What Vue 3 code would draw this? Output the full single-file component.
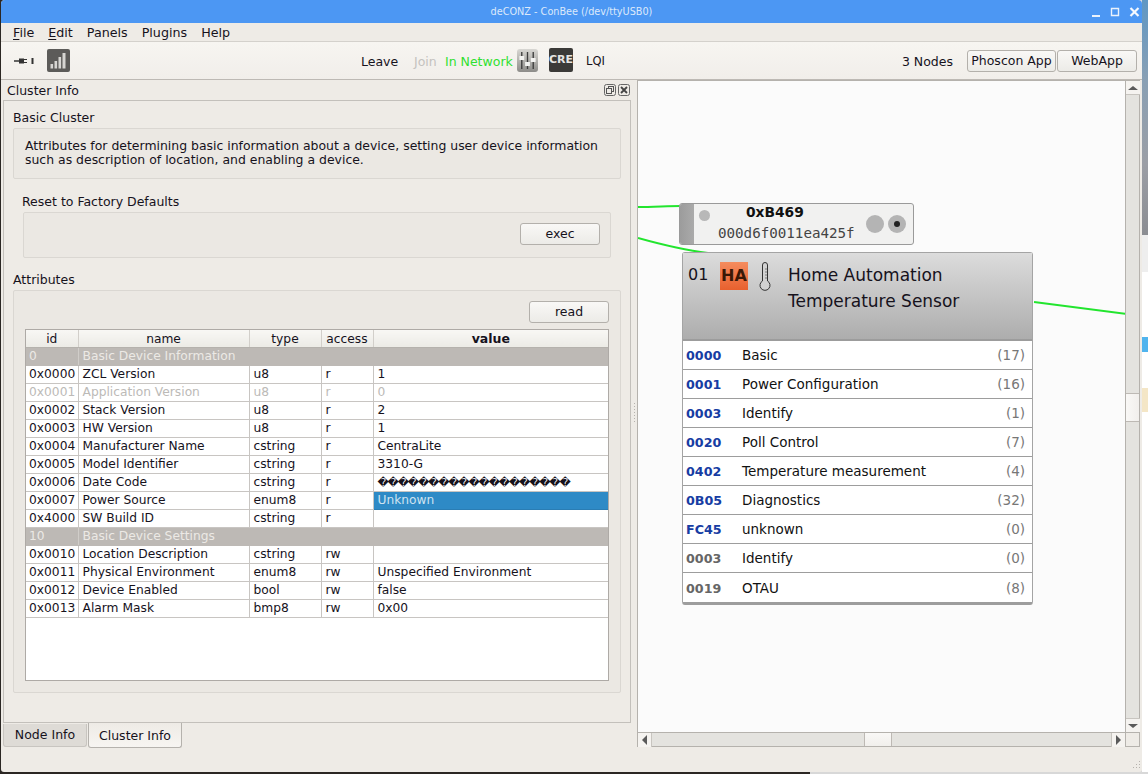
<script setup>
const menus = [
  { key: 'F', rest: 'ile' },
  { key: 'E', rest: 'dit' },
  { key: '', rest: 'Panels' },
  { key: '', rest: 'Plugins' },
  { key: '', rest: 'Help' }
]
const rows = [
  { section: true, id: '0', name: 'Basic Device Information' },
  { id: '0x0000', name: 'ZCL Version', type: 'u8', access: 'r', value: '1' },
  { id: '0x0001', name: 'Application Version', type: 'u8', access: 'r', value: '0', off: true },
  { id: '0x0002', name: 'Stack Version', type: 'u8', access: 'r', value: '2' },
  { id: '0x0003', name: 'HW Version', type: 'u8', access: 'r', value: '1' },
  { id: '0x0004', name: 'Manufacturer Name', type: 'cstring', access: 'r', value: 'CentraLite' },
  { id: '0x0005', name: 'Model Identifier', type: 'cstring', access: 'r', value: '3310-G' },
  { id: '0x0006', name: 'Date Code', type: 'cstring', access: 'r', value: '\uFFFD'.repeat(19), garbled: true },
  { id: '0x0007', name: 'Power Source', type: 'enum8', access: 'r', value: 'Unknown', selected: true },
  { id: '0x4000', name: 'SW Build ID', type: 'cstring', access: 'r', value: '' },
  { section: true, id: '10', name: 'Basic Device Settings' },
  { id: '0x0010', name: 'Location Description', type: 'cstring', access: 'rw', value: '' },
  { id: '0x0011', name: 'Physical Environment', type: 'enum8', access: 'rw', value: 'Unspecified Environment' },
  { id: '0x0012', name: 'Device Enabled', type: 'bool', access: 'rw', value: 'false' },
  { id: '0x0013', name: 'Alarm Mask', type: 'bmp8', access: 'rw', value: '0x00' }
]
const clusters = [
  { code: '0000', name: 'Basic', count: 17 },
  { code: '0001', name: 'Power Configuration', count: 16 },
  { code: '0003', name: 'Identify', count: 1 },
  { code: '0020', name: 'Poll Control', count: 7 },
  { code: '0402', name: 'Temperature measurement', count: 4 },
  { code: '0B05', name: 'Diagnostics', count: 32 },
  { code: 'FC45', name: 'unknown', count: 0 },
  { code: '0003', name: 'Identify', count: 0, out: true },
  { code: '0019', name: 'OTAU', count: 8, out: true }
]
</script>

<template>
  <div class="desktop">
    <div class="window">
      <header class="titlebar">
        <span class="title-text">deCONZ - ConBee (/dev/ttyUSB0)</span>
        <div class="win-buttons">
          <svg width="10" height="10" viewBox="0 0 10 10"><rect x="1" y="8" width="8" height="2" fill="#eaf2fc" /></svg>
          <svg width="10" height="10" viewBox="0 0 10 10"><path d="M1.5 1.5h7v7h-7z" fill="none" stroke="#eaf2fc" stroke-width="1.4" /></svg>
          <svg width="11" height="10" viewBox="0 0 11 10"><path d="M1.5 1l8 8M9.5 1l-8 8" stroke="#f4f8fe" stroke-width="2.2" /></svg>
        </div>
      </header>

      <nav class="menubar">
        <span v-for="m in menus" :key="m.rest" class="menu"><u v-if="m.key">{{ m.key }}</u>{{ m.rest }}</span>
      </nav>

      <div class="toolbar">
        <div class="tool-left">
          <svg class="plug" width="20" height="10" viewBox="0 0 20 10">
            <path d="M0 5h5" stroke="#333" stroke-width="1.4" />
            <path d="M5 2.500h5v5h-5z" fill="#333" />
            <path d="M10 3.500h3M10 6.500h3" stroke="#333" stroke-width="1" />
            <rect x="17.500" y="2" width="2" height="6" fill="#333" />
          </svg>
          <svg class="signal" width="23" height="23" viewBox="0 0 23 23">
            <rect x="0" y="0" width="23" height="23" rx="2" fill="#5c5b59" />
            <g fill="#d6d5d2">
              <rect x="3.500" y="15" width="2.600" height="4.500" />
              <rect x="7.500" y="12" width="2.600" height="7.500" />
              <rect x="11.500" y="8" width="2.600" height="11.500" />
              <rect x="15.500" y="4" width="3" height="15.500" />
            </g>
          </svg>
        </div>
        <div class="tool-center">
          <span class="t-leave">Leave</span>
          <span class="t-join">Join</span>
          <span class="t-net">In Network</span>
          <svg class="mixer" width="21" height="23" viewBox="0 0 22 23" preserveAspectRatio="none">
            <defs>
              <linearGradient id="mx" x1="0" y1="0" x2="0" y2="1"><stop offset="0" stop-color="#d8d7d3" /><stop offset="1" stop-color="#8d8c89" /></linearGradient>
            </defs>
            <rect width="22" height="23" rx="3" fill="url(#mx)" />
            <path d="M5 3v17M11 3v17M17 3v17" stroke="#3c3c3c" stroke-width="1.400" />
            <rect x="2.500" y="7" width="5" height="4" fill="#f2f2f0" />
            <rect x="8.500" y="13" width="5" height="4" fill="#f2f2f0" />
            <rect x="14.500" y="9" width="5" height="4" fill="#f2f2f0" />
          </svg>
          <span class="cre">CRE</span>
          <span class="t-lqi">LQI</span>
        </div>
        <div class="tool-right">
          <span class="t-nodes">3 Nodes</span>
          <button class="btn btn-phoscon">Phoscon App</button>
          <button class="btn btn-webapp">WebApp</button>
        </div>
      </div>

      <main class="workspace">
        <section class="dock">
          <div class="dock-title">
            <span>Cluster Info</span>
            <div class="dock-icons">
              <svg width="12" height="12" viewBox="0 0 12 12">
                <rect x="0.500" y="0.500" width="11" height="11" rx="2" fill="none" stroke="#666" />
                <rect x="4.500" y="2.500" width="5" height="5" fill="none" stroke="#555" />
                <rect x="2.500" y="4.500" width="5" height="5" fill="#eeebe6" stroke="#555" />
              </svg>
              <svg width="12" height="12" viewBox="0 0 12 12">
                <rect x="0.500" y="0.500" width="11" height="11" rx="2" fill="none" stroke="#666" />
                <path d="M3 3l6 6M9 3l-6 6" stroke="#444" stroke-width="1.800" />
              </svg>
            </div>
          </div>

          <div class="dock-frame">
            <h3 class="label">Basic Cluster</h3>
            <div class="group desc">
              Attributes for determining basic information about a device, setting user device information such as description of location, and enabling a device.
            </div>

            <h3 class="label label-reset">Reset to Factory Defaults</h3>
            <div class="group reset">
              <button class="btn btn-action">exec</button>
            </div>

            <h3 class="label label-attr">Attributes</h3>
            <div class="group attrs">
              <div class="attrs-head"><button class="btn btn-action">read</button></div>
              <div class="table-wrap">
                <table class="attr-table">
                  <colgroup>
                    <col class="c-id" /><col class="c-name" /><col class="c-type" /><col class="c-access" /><col class="c-value" />
                  </colgroup>
                  <thead>
                    <tr>
                      <th>id</th><th>name</th><th>type</th><th>access</th><th class="th-value">value</th>
                    </tr>
                  </thead>
                  <tbody>
                    <template v-for="r in rows" :key="r.id">
                      <tr v-if="r.section" class="section">
                        <td>{{ r.id }}</td>
                        <td colspan="4">{{ r.name }}</td>
                      </tr>
                      <tr v-else :class="{ off: r.off }">
                        <td>{{ r.id }}</td>
                        <td>{{ r.name }}</td>
                        <td>{{ r.type }}</td>
                        <td>{{ r.access }}</td>
                        <td :class="{ selected: r.selected, garbled: r.garbled }">{{ r.value }}</td>
                      </tr>
                    </template>
                  </tbody>
                </table>
              </div>
            </div>
          </div>

          <div class="tabs">
            <span class="tab">Node Info</span>
            <span class="tab tab-active">Cluster Info</span>
          </div>
        </section>

        <div class="splitter"><i></i></div>

        <section class="graph-view">
          <div class="canvas">
            <svg class="wires" width="489" height="653" viewBox="0 0 489 653">
              <path d="M0 126 C 15 126 30 125 43 125" class="wire" />
              <path d="M0 157 C 25 164 45 169 70 172" class="wire" />
              <path d="M396 221 L 489 233" class="wire" />
            </svg>

            <div class="node-small">
              <div class="ns-bar"></div>
              <span class="ns-dot"></span>
              <div class="ns-text">
                <b>0xB469</b>
                <span>000d6f0011ea425f</span>
              </div>
              <span class="ns-round"></span>
              <span class="ns-round ns-target"></span>
            </div>

            <div class="node-big">
              <div class="nb-head">
                <span class="nb-ep">01</span>
                <span class="nb-ha">HA</span>
                <svg class="nb-therm" width="12" height="29" viewBox="0 0 12 29">
                  <path d="M3.500 3a2.500 2.500 0 0 1 5 0v16a5 5 0 1 1-5 0z" fill="#d2d2d2" stroke="#333" stroke-width="1" />
                  <path d="M8 7h-2M8 10h-2M8 13h-2M8 16h-2" stroke="#666" stroke-width="0.800" />
                </svg>
                <div class="nb-title">Home Automation<br />Temperature Sensor</div>
              </div>
              <div v-for="(c, i) in clusters" :key="i" class="nb-row" :class="{ out: c.out }">
                <b class="nb-code">{{ c.code }}</b>
                <span class="nb-name">{{ c.name }}</span>
                <span class="nb-count">({{ c.count }})</span>
              </div>
            </div>
          </div>

          <div class="vbar">
            <span class="sb-btn sb-up"><i></i></span>
            <span class="v-track"></span>
            <span class="v-handle"></span>
            <span class="v-track v-track-2"></span>
            <span class="sb-btn sb-down"><i></i></span>
          </div>
          <div class="hbar">
            <span class="sb-btn sb-left"><i></i></span>
            <span class="h-track"></span>
            <span class="h-handle"></span>
            <span class="h-track h-track-2"></span>
            <span class="sb-btn sb-right"><i></i></span>
          </div>
          <div class="corner"></div>
        </section>
      </main>

      <footer class="statusbar">
        <svg width="10" height="10" viewBox="0 0 10 10" fill="#b5b2ad">
          <rect x="8" y="0" width="1" height="1" /><rect x="5" y="3" width="1" height="1" /><rect x="8" y="3" width="1" height="1" /><rect x="2" y="6" width="1" height="1" /><rect x="5" y="6" width="1" height="1" /><rect x="8" y="6" width="1" height="1" />
        </svg>
      </footer>
    </div>

    <aside class="behind">
      <div class="b-wall"></div>
      <div class="b-light"></div>
      <div class="b-white"></div>
      <div class="b-blue"></div>
      <div class="b-white b-white-2"></div>
      <div class="b-beige"></div>
      <div class="b-white b-white-3"></div>
    </aside>
  </div>
</template>

<style>
html, body { margin: 0; padding: 0; background: #2b2723; }
</style>

<style scoped>
.desktop {
  width: 1148px;
  height: 774px;
  overflow: hidden;
  display: flex;
  font-family: "DejaVu Sans", sans-serif;
  font-size: 12px;
  color: #16121c;
  background: linear-gradient(90deg, #2b2723 810px, #d8d8d8 810px);
}
.window {
  width: 1141px;
  height: 772px;
  margin-left: 1px;
  display: flex;
  flex-direction: column;
  background: #eeebe6;
  border-radius: 4px 4px 3px 3px;
  overflow: hidden;
  flex: none;
}
.behind {
  flex: 1;
  display: flex;
  flex-direction: column;
  height: 772px;
}
.b-wall { height: 235px; background: linear-gradient(#5f97c4, #8aa0b4 35%, #9b9ea5 70%, #8b8d92); }
.b-light { height: 37px; background: #eeeeee; }
.b-white { height: 65px; background: #fff; }
.b-blue { height: 15px; background: #50b4ee; }
.b-white-2 { height: 36px; }
.b-beige { height: 24px; background: #f4e6c6; }
.b-white-3 { height: auto; flex: 1; }

.titlebar {
  height: 23px;
  flex: none;
  background: #4c97f3;
  display: flex;
  align-items: center;
  justify-content: center;
  position: relative;
}
.title-text { font-size: 9.700px; color: #dce9fb; }
.win-buttons {
  position: absolute;
  right: 2px;
  top: 7px;
  display: flex;
  gap: 9px;
}
.menubar {
  height: 18px;
  flex: none;
  display: flex;
  gap: 14px;
  padding-left: 12px;
  align-items: center;
  background: #eeebe6;
  font-size: 12.700px;
  border-bottom: 1px solid #d4d1cc;
}
.menu u { text-underline-offset: 2px; }

.toolbar {
  height: 37px;
  flex: none;
  display: flex;
  align-items: center;
  position: relative;
  background: linear-gradient(#f7f5f1, #f1eeea);
  border-bottom: 1px solid #bdb9b4;
  font-size: 12.500px;
}
.tool-left { display: flex; align-items: center; padding-left: 13px; gap: 13px; width: 347px; }
.plug { margin-top: 1px; }
.signal { margin-top: -1px; }
.tool-center { display: flex; align-items: center; padding-top: 1px; }
.t-leave { width: 53px; }
.t-join { width: 31px; color: #c4c2bf; }
.t-net { width: 72px; color: #2fe02f; }
.mixer { margin-right: 11px; margin-top: -1px; }
.cre {
  width: 24px;
  height: 24px;
  margin-right: 13px;
  margin-top: -2px;
  background: #3b3a38;
  border-radius: 2px;
  color: #e6e5e3;
  font-size: 11px;
  font-weight: 700;
  line-height: 24px;
  text-align: center;
}
.t-lqi { font-size: 11.500px; }
.tool-right { margin-left: auto; display: flex; align-items: center; padding-right: 5px; }
.t-nodes { margin-right: 14px; padding-top: 1px; }
.btn {
  font: inherit;
  color: inherit;
  padding: 0;
  border: 1px solid #b3b0ab;
  border-radius: 3px;
  background: linear-gradient(#f9f8f6, #ecebe7);
}
.btn-phoscon { width: 89px; height: 22px; margin-right: 1px; }
.btn-webapp { width: 80px; height: 22px; }

.workspace {
  flex: 1;
  display: flex;
  min-height: 0;
  padding-left: 2px;
}
.dock {
  width: 628px;
  display: flex;
  flex-direction: column;
}
.dock-title {
  height: 20px;
  flex: none;
  display: flex;
  align-items: center;
  justify-content: space-between;
  padding: 0 1px 0 4px;
  font-size: 12.500px;
}
.dock-title > span { padding-top: 1px; }
.dock-frame {
  height: 623px;
  flex: none;
  box-sizing: border-box;
  border: 1px solid #c3c0bb;
  padding: 10px 9px 0 9px;
  display: flex;
  flex-direction: column;
}
.dock-icons { display: flex; gap: 2px; }
.label {
  margin: 0;
  font-weight: 400;
  font-size: 12.500px;
  height: 17px;
  line-height: 13px;
  flex: none;
}
.label-reset { margin: 16px 0 0 9px; }
.label-attr { margin-top: 15px; }
.group {
  box-sizing: border-box;
  background: #ebe8e3;
  border: 1px solid #dad7d2;
  border-radius: 2px;
  flex: none;
}
.desc {
  height: 51px;
  padding: 10px 11px 0;
  line-height: 14px;
  font-size: 12.450px;
}
.reset {
  height: 46px;
  margin: 0 10px 0 10px;
  padding: 10px 10px 0 0;
  display: flex;
  justify-content: flex-end;
}
.btn-action { width: 80px; height: 22px; font-size: 12.500px; padding-bottom: 1px; }
.attrs {
  height: 403px;
  padding: 10px 11px 0 12px;
}
.attrs-head { display: flex; justify-content: flex-end; height: 28px; }
.table-wrap {
  height: 352px;
  width: 584px;
  margin-left: -1px;
  box-sizing: border-box;
  background: #fff;
  border: 1px solid #aeaaa6;
  overflow: hidden;
}
.attr-table {
  width: 582px;
  table-layout: fixed;
  border-collapse: collapse;
  font-size: 12.250px;
}
.c-id { width: 52px; }
.c-name { width: 171px; }
.c-type { width: 72px; }
.c-access { width: 52px; }
.attr-table th {
  height: 17px;
  padding: 1px 0 0;
  font-weight: 400;
  background: linear-gradient(#f8f7f4, #ecebe6);
  border-right: 1px solid #d2cfca;
  border-bottom: 1px solid #b5b2ad;
  box-sizing: border-box;
}
.attr-table th:last-child { border-right: 0; }
.attr-table .th-value { font-weight: 700; font-size: 12.500px; }
.attr-table td {
  height: 18px;
  box-sizing: border-box;
  padding: 0 3px 0 4px;
  white-space: nowrap;
  overflow: hidden;
  border-right: 1px solid #c8c5c2;
  border-bottom: 1px solid #c8c5c2;
}
.attr-table td:first-child { padding-left: 3px; }
.attr-table td:last-child { border-right: 0; }
.attr-table .section td {
  background: #bdb9b5;
  color: #ece9e5;
  border-color: #bdb9b5;
}
.attr-table .section td:first-child { border-right-color: #d0cdc9; }
.attr-table .off td { color: #bcbab7; }
.attr-table td.selected { background: #2e8ac6; color: #cfe3f1; border-bottom-color: #2a7db4; }
.attr-table td.garbled { font-size: 11px; letter-spacing: -1.170px; }

.tabs {
  display: flex;
  align-items: flex-start;
  padding-top: 1px;
  font-size: 12.500px;
}
.tab {
  width: 84px;
  height: 23px;
  box-sizing: border-box;
  text-align: center;
  line-height: 22px;
  background: #dedbd6;
  border: 1px solid #c8c5c0;
  border-top: 0;
  border-radius: 0 0 3px 3px;
}
.tab-active {
  width: 94px;
  height: 25px;
  margin-left: 1px;
  margin-top: -1px;
  line-height: 26px;
  background: linear-gradient(#eeebe6, #f7f5f2);
  border-color: #b5b2ad;
}

.splitter {
  width: 6px;
  display: flex;
  justify-content: center;
  align-items: center;
}
.splitter i {
  width: 1px;
  height: 20px;
  background: repeating-linear-gradient(#b5b2ad 0 1px, transparent 1px 3px);
}

.graph-view {
  width: 503px;
  height: 667px;
  box-sizing: border-box;
  border: 1px solid #b5b2ad;
  display: grid;
  grid-template-columns: 1fr 14px;
  grid-template-rows: 1fr 14px;
}
.canvas {
  position: relative;
  background: #fbfbfb;
  overflow: hidden;
}
.wires { position: absolute; left: 0; top: 0; }
.wire { fill: none; stroke: #22e52e; stroke-width: 2; }
.node-small {
  position: absolute;
  left: 41px;
  top: 122px;
  width: 235px;
  height: 42px;
  box-sizing: border-box;
  display: flex;
  align-items: center;
  background: #f1f1f0;
  border: 1px solid #9a9a9a;
  border-right-width: 1.500px;
  border-bottom-width: 1.500px;
  border-radius: 3px;
  overflow: hidden;
}
.ns-bar { width: 14px; height: 100%; background: linear-gradient(90deg, #9c9c9c, #aaaaaa); flex: none; }
.ns-dot {
  position: absolute;
  left: 19px;
  top: 6px;
  width: 11px;
  height: 11px;
  border-radius: 50%;
  background: #b8b8b8;
}
.ns-text {
  position: absolute;
  left: 38px;
  top: 0;
  width: 137px;
  display: flex;
  flex-direction: column;
  align-items: flex-start;
}
.ns-text b { font-size: 13.800px; line-height: 16px; margin-left: 28px; color: #111; }
.ns-text span {
  font-family: "DejaVu Sans Mono", monospace;
  font-size: 14.200px;
  line-height: 20px;
  margin-top: 3px;
  color: #444;
}
.ns-round {
  position: absolute;
  left: 186px;
  top: 11px;
  width: 18px;
  height: 18px;
  border-radius: 50%;
  background: #b4b4b4;
}
.ns-target { left: 208px; }
.ns-target::after {
  content: "";
  position: absolute;
  left: 6px;
  top: 6px;
  width: 6px;
  height: 6px;
  border-radius: 50%;
  background: #222;
}
.node-big {
  position: absolute;
  left: 44px;
  top: 171px;
  width: 351px;
  box-sizing: border-box;
  background: #fff;
  border: 1px solid #a4a4a4;
  border-bottom: 3px solid #9d9d9d;
  border-radius: 3px;
  font-size: 13.500px;
}
.nb-head {
  height: 88px;
  box-sizing: border-box;
  background: linear-gradient(#dcdcdc, #adadad);
  border-bottom: 2px solid #9c9c9c;
  position: relative;
  display: flex;
  align-items: flex-start;
}
.nb-ep { position: absolute; left: 5px; top: 12px; font-size: 16px; line-height: 20px; }
.nb-ha {
  position: absolute;
  left: 37px;
  top: 9px;
  width: 28px;
  height: 28px;
  background: linear-gradient(#f58c5e, #e8602e);
  color: #3a1806;
  font-size: 16px;
  font-weight: 700;
  line-height: 28px;
  text-align: center;
}
.nb-therm { position: absolute; left: 76px; top: 9px; }
.nb-title {
  position: absolute;
  left: 105px;
  top: 9px;
  font-size: 17px;
  line-height: 26px;
  white-space: nowrap;
}
.nb-row {
  height: 29px;
  box-sizing: border-box;
  display: flex;
  align-items: center;
  padding: 0 7px 0 3px;
  border-bottom: 1px solid #9d9d9d;
}
.nb-row:last-child { border-bottom: 0; padding-top: 1px; }
.nb-code { width: 56px; color: #173da3; font-size: 12.700px; }
.out .nb-code { color: #666; }
.nb-name { flex: 1; color: #111; }
.nb-count { color: #777; }

.vbar, .hbar { display: flex; background: #e4e3df; }
.vbar { flex-direction: column; border-left: 1px solid #b5b2ad; }
.hbar { border-top: 1px solid #b5b2ad; }
.corner { background: #eeebe6; border-left: 1px solid #b5b2ad; border-top: 1px solid #b5b2ad; }
.sb-btn {
  flex: none;
  width: 14px;
  height: 14px;
  box-sizing: border-box;
  display: flex;
  align-items: center;
  justify-content: center;
  background: #f5f3f0;
}
.sb-btn i { width: 0; height: 0; border-style: solid; border-color: transparent; }
.sb-up { border-bottom: 1px solid #c8c5c0; }
.sb-up i { border-width: 0 5px 4px; border-bottom-color: #5a5a5a; }
.sb-down { border-top: 1px solid #c8c5c0; }
.sb-down i { border-width: 4px 5px 0; border-top-color: #5a5a5a; }
.sb-left { border-right: 1px solid #c8c5c0; }
.sb-left i { border-width: 5px 5px 5px 0; border-right-color: #5a5a5a; }
.sb-right { border-left: 1px solid #c8c5c0; }
.sb-right i { border-width: 5px 0 5px 5px; border-left-color: #5a5a5a; }
.v-track { height: 298px; }
.v-track-2 { height: auto; flex: 1; }
.v-handle {
  height: 29px;
  box-sizing: border-box;
  background: linear-gradient(90deg, #f9f8f6, #f1efec);
  border-top: 1px solid #bdb9b4;
  border-bottom: 1px solid #bdb9b4;
}
.h-track { width: 212px; }
.h-track-2 { width: auto; flex: 1; }
.h-handle {
  width: 28px;
  box-sizing: border-box;
  background: linear-gradient(#f9f8f6, #f1efec);
  border-left: 1px solid #bdb9b4;
  border-right: 1px solid #bdb9b4;
}
.statusbar {
  height: 25px;
  flex: none;
  display: flex;
  justify-content: flex-end;
  align-items: flex-end;
  padding: 0 1px 1px 0;
}
</style>
